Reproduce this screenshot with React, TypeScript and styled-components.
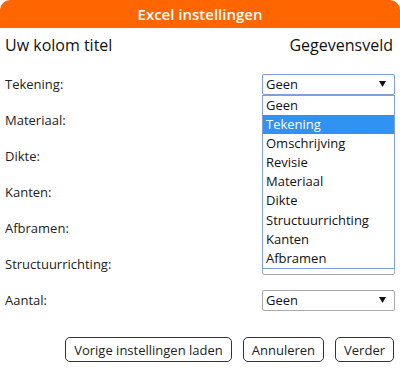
import React, { useState } from 'react';
import styled, { createGlobalStyle } from 'styled-components';

const GlobalStyle = createGlobalStyle`
  html, body {
    margin: 0;
    padding: 0;
    background: #fff;
  }
  body {
    font-family: "Open Sans", "Noto Sans", sans-serif;
    color: #222;
  }
`;

const Dialog = styled.div`
  width: 400px;
  height: 368px;
  display: flex;
  flex-direction: column;
  background: #fff;
  overflow: hidden;
`;

const Header = styled.div`
  height: 28px;
  flex-shrink: 0;
  display: flex;
  align-items: center;
  justify-content: center;
  background: #ff6600;
  border-radius: 10px 10px 0 0;
  color: #fff;
  font-size: 15px;
  font-weight: 600;
`;

const TitleRow = styled.div`
  height: 34px;
  display: flex;
  align-items: center;
  justify-content: space-between;
  padding: 0 7px 0 5px;
  font-size: 16px;
  color: #111;
`;

const Rows = styled.div`
  padding-top: 4px;
  display: flex;
  flex-direction: column;
`;

const Row = styled.div`
  height: 36px;
  display: flex;
  align-items: center;
  justify-content: space-between;
  padding: 0 5px;
`;

const Label = styled.span`
  font-size: 13px;
  color: #222;
`;

const SelectWrap = styled.div`
  position: relative;
  width: 133px;
`;

const SelectBox = styled.div<{ $open?: boolean }>`
  height: 21px;
  box-sizing: border-box;
  display: flex;
  align-items: center;
  justify-content: space-between;
  padding: 0 8px 0 3px;
  border: 1px solid ${(p) => (p.$open ? '#7d9fdc' : '#a9a9a9')};
  border-radius: 2px;
  background: #fff;
  font-size: 13px;
  color: #111;
  cursor: default;
`;

const List = styled.ul`
  position: absolute;
  top: 21px;
  left: 0;
  right: 0;
  margin: 0;
  padding: 0;
  list-style: none;
  border: 1px solid #7d9fdc;
  background: #fff;
  z-index: 2;
`;

const Option = styled.li<{ $active?: boolean }>`
  height: 19.2px;
  line-height: 19px;
  padding-left: 3px;
  font-size: 13px;
  color: ${(p) => (p.$active ? '#fff' : '#111')};
  background: ${(p) => (p.$active ? '#3092f3' : 'transparent')};
  white-space: nowrap;
`;

const Footer = styled.div`
  margin-top: 19px;
  display: flex;
  justify-content: flex-end;
  gap: 11px;
  padding-right: 6px;
`;

const Button = styled.button`
  height: 25px;
  padding: 0 8px;
  border: 1px solid #333;
  border-radius: 5px;
  background: #fff;
  font-family: "Open Sans", "Noto Sans", sans-serif;
  font-size: 13px;
  color: #222;
  cursor: pointer;
`;

const Arrow = () => (
  <svg width="7" height="6" viewBox="0 0 7 6">
    <path d="M0 0 H7 L3.5 6 Z" fill="#111" />
  </svg>
);

const options = [
  'Geen',
  'Tekening',
  'Omschrijving',
  'Revisie',
  'Materiaal',
  'Dikte',
  'Structuurrichting',
  'Kanten',
  'Afbramen',
];

const fields = ['Tekening', 'Materiaal', 'Dikte', 'Kanten', 'Afbramen', 'Structuurrichting', 'Aantal'];

const App: React.FC = () => {
  const [open, setOpen] = useState<string | null>('Tekening');
  const [hover] = useState('Tekening');

  return (
    <Dialog>
      <GlobalStyle />
      <Header>Excel instellingen</Header>
      <TitleRow>
        <span>Uw kolom titel</span>
        <span>Gegevensveld</span>
      </TitleRow>
      <Rows>
        {fields.map((f) => (
          <Row key={f}>
            <Label>{f}:</Label>
            <SelectWrap>
              <SelectBox $open={open === f} onClick={() => setOpen(open === f ? null : f)}>
                <span>Geen</span>
                <Arrow />
              </SelectBox>
              {open === f && (
                <List>
                  {options.map((o) => (
                    <Option key={o} $active={o === hover} onClick={() => setOpen(null)}>
                      {o}
                    </Option>
                  ))}
                </List>
              )}
            </SelectWrap>
          </Row>
        ))}
      </Rows>
      <Footer>
        <Button>Vorige instellingen laden</Button>
        <Button>Annuleren</Button>
        <Button>Verder</Button>
      </Footer>
    </Dialog>
  );
};

export default App;
